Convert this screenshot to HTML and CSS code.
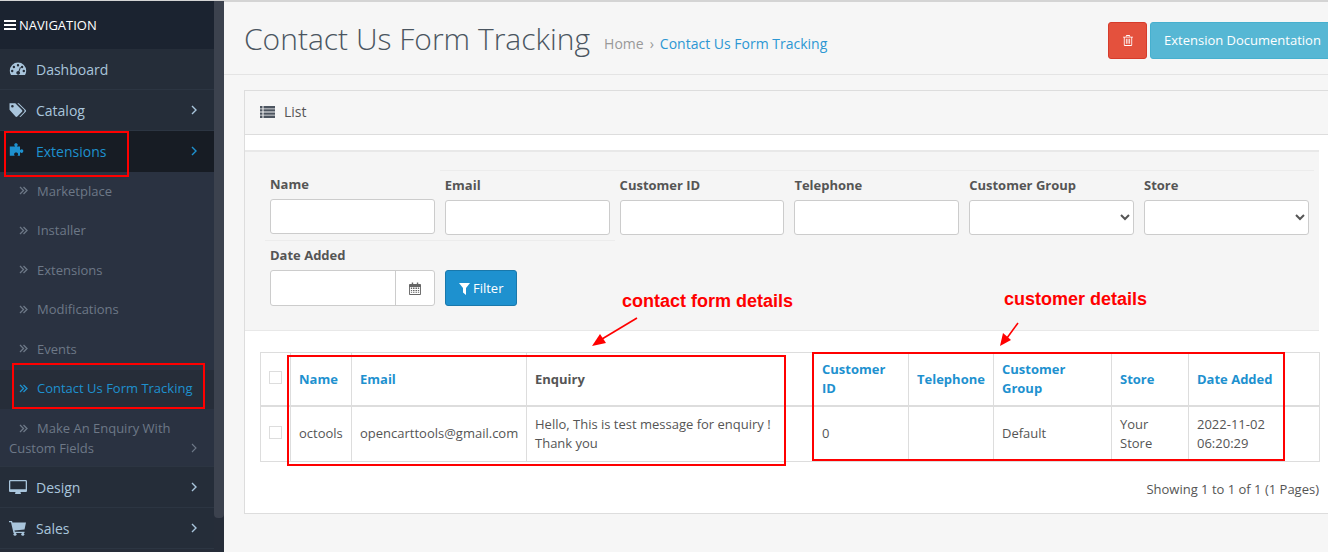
FILE: index.html
```html
<!DOCTYPE html>
<html>

<head>
    <meta charset="UTF-8">
    <title>Contact Us Form Tracking</title>
    <link rel="stylesheet" href="styles.css">
</head>

<body>
    <div class="page">
        <!-- sidebar -->
        <aside class="sidebar">
            <div class="side-inner">
                <div class="nav-title">
                    <svg class="bars" viewBox="0 0 12 10"><path d="M0 0h12v2H0zM0 4h12v2H0zM0 8h12v2H0z" /></svg>
                    <span>NAVIGATION</span>
                </div>
                <ul class="menu">
                    <li class="menu-item">
                        <svg class="ico" viewBox="0 0 18 16"><path fill-rule="evenodd" d="M9 1.5a8.2 8.2 0 0 0-8.2 8.3c0 1.600.4 3 1.200 4.200h14c.8-1.200 1.200-2.600 1.200-4.200A8.200 8.200 0 0 0 9 1.500zM9 3a1.200 1.200 0 1 1 0 2.400A1.200 1.200 0 0 1 9 3zM4.900 4.800a1.200 1.200 0 1 1 0 2.400 1.200 1.200 0 0 1 0-2.400zm8.200 0a1.200 1.200 0 1 1 0 2.400 1.200 1.200 0 0 1 0-2.400zM3.200 8.800a1.200 1.200 0 1 1 0 2.400 1.200 1.200 0 0 1 0-2.400zm11.600 0a1.200 1.200 0 1 1 0 2.400 1.200 1.200 0 0 1 0-2.400zM11 6l.9.4-1.500 4a1.900 1.900 0 1 1-.9-.4z" /></svg>
                        <span>Dashboard</span>
                    </li>
                    <li class="menu-item">
                        <svg class="ico" viewBox="0 0 18 16"><path fill-rule="evenodd" d="M.5 1.200h5.800L13 8a1.300 1.300 0 0 1 0 1.800l-4.700 4.700a1.300 1.300 0 0 1-1.800 0L.5 7.800zm2.900 1.800a1.300 1.300 0 1 0 0 2.600 1.300 1.300 0 0 0 0-2.600z" /><path d="M8.300 1.200h1.500L16.700 8a1.300 1.300 0 0 1 0 1.800l-4.700 4.700a1.300 1.300 0 0 1-1.500.2l4.600-4.700a1.600 1.600 0 0 0 0-2.200z" /></svg>
                        <span>Catalog</span>
                        <svg class="angle" viewBox="0 0 6 10"><path d="M1 1l4 4-4 4" /></svg>
                    </li>
                    <li class="menu-item is-open">
                        <svg class="ico" viewBox="0 0 18 16"><path d="M4 3.500h2.200C5.500 2.900 5.200 2.400 5.200 1.800 5.200.8 6 .2 7 .2s1.800.6 1.800 1.600c0 .6-.3 1.100-1 1.700H11v3.700c.6-.6 1.100-.9 1.700-.9 1 0 1.600.8 1.600 1.800s-.6 1.800-1.600 1.800c-.6 0-1.100-.3-1.700-.9v3.700H8.400c.5-.6.700-1 .7-1.500 0-1-.9-1.600-2-1.600s-2 .6-2 1.600c0 .5.200.9.700 1.500H.8V3.500z" /></svg>
                        <span>Extensions</span>
                        <svg class="angle" viewBox="0 0 6 10"><path d="M1 1l4 4-4 4" /></svg>
                    </li>
                    <li class="sub-item"><svg class="dbl" viewBox="0 0 9 9"><path d="M1 1l3.500 3.500L1 8M4.500 1L8 4.500 4.500 8" /></svg><span>Marketplace</span></li>
                    <li class="sub-item"><svg class="dbl" viewBox="0 0 9 9"><path d="M1 1l3.500 3.500L1 8M4.500 1L8 4.500 4.500 8" /></svg><span>Installer</span></li>
                    <li class="sub-item"><svg class="dbl" viewBox="0 0 9 9"><path d="M1 1l3.500 3.500L1 8M4.500 1L8 4.500 4.500 8" /></svg><span>Extensions</span></li>
                    <li class="sub-item"><svg class="dbl" viewBox="0 0 9 9"><path d="M1 1l3.500 3.500L1 8M4.500 1L8 4.500 4.500 8" /></svg><span>Modifications</span></li>
                    <li class="sub-item"><svg class="dbl" viewBox="0 0 9 9"><path d="M1 1l3.500 3.500L1 8M4.500 1L8 4.500 4.500 8" /></svg><span>Events</span></li>
                    <li class="sub-item is-active"><svg class="dbl" viewBox="0 0 9 9"><path d="M1 1l3.500 3.500L1 8M4.500 1L8 4.500 4.500 8" /></svg><span>Contact Us Form Tracking</span></li>
                    <li class="sub-item is-double">
                        <div class="sub-line"><svg class="dbl" viewBox="0 0 9 9"><path d="M1 1l3.500 3.500L1 8M4.500 1L8 4.500 4.500 8" /></svg><span>Make An Enquiry With</span></div>
                        <div class="sub-line-2"><span>Custom Fields</span><svg class="angle" viewBox="0 0 6 10"><path d="M1 1l4 4-4 4" /></svg></div>
                    </li>
                    <li class="menu-item">
                        <svg class="ico" viewBox="0 0 18 16"><path fill-rule="evenodd" d="M1.300 1h15.400c.7 0 1.300.6 1.300 1.300v9.400c0 .7-.6 1.300-1.300 1.300H11.500c0 .8.5 1.200.5 1.600 0 .2-.2.400-.4.400H6.400a.4.400 0 0 1-.4-.4c0-.4.500-.8.500-1.600H1.300C.6 13 0 12.400 0 11.700V2.300C0 1.600.6 1 1.300 1zM1.300 2.300v8h15.400v-8z" /></svg>
                        <span>Design</span>
                        <svg class="angle" viewBox="0 0 6 10"><path d="M1 1l4 4-4 4" /></svg>
                    </li>
                    <li class="menu-item">
                        <svg class="ico" viewBox="0 0 18 16"><path d="M0 1h3l.5 1.500H17l-1.500 7-10 1 .4 1.200h9.600v1.300H4.500L2 2.300H0z" /><circle cx="6" cy="14.300" r="1.500" /><circle cx="13.800" cy="14.300" r="1.500" /></svg>
                        <span>Sales</span>
                        <svg class="angle" viewBox="0 0 6 10"><path d="M1 1l4 4-4 4" /></svg>
                    </li>
                </ul>
            </div>
            <div class="side-scroll"></div>
        </aside>

        <!-- content -->
        <main class="content">
            <header class="page-head">
                <h1>Contact Us Form Tracking</h1>
                <div class="crumbs">
                    <span class="crumb-home">Home</span>
                    <span class="crumb-sep">›</span>
                    <span class="crumb-link">Contact Us Form Tracking</span>
                </div>
                <div class="head-btns">
                    <button class="btn-del">
                        <svg viewBox="0 0 12 13"><path fill-rule="evenodd" d="M4 0h4l.8 2H12v1h-1v9a1 1 0 0 1-1 1H2a1 1 0 0 1-1-1V3H0V2h3.200zM4.300 1l-.3 1h4l-.3-1zM2 3v9h8V3zM3.500 4.500h1v6h-1zM5.500 4.500h1v6h-1zM7.500 4.500h1v6h-1z" /></svg>
                    </button>
                    <button class="btn-doc">Extension Documentation</button>
                </div>
            </header>

            <section class="panel">
                <div class="panel-head">
                    <svg class="list-ico" viewBox="0 0 15 12"><path d="M0 0h2.500v2.400H0zM3.500 0H15v2.400H3.500zM0 3.200h2.500v2.400H0zM3.500 3.200H15v2.400H3.500zM0 6.400h2.500v2.400H0zM3.500 6.400H15v2.400H3.500zM0 9.600h2.500V12H0zM3.500 9.600H15V12H3.500z" /></svg>
                    <span>List</span>
                </div>
                <div class="panel-body">
                    <div class="filter-well">
                        <div class="filter-row">
                            <div class="field field-first"><label>Name</label><input type="text"></div>
                            <div class="field"><label>Email</label><input type="text"></div>
                            <div class="field"><label>Customer ID</label><input type="text"></div>
                            <div class="field"><label>Telephone</label><input type="text"></div>
                            <div class="field"><label>Customer Group</label><select></select></div>
                            <div class="field"><label>Store</label><select></select></div>
                        </div>
                        <div class="filter-row-2">
                            <div class="field-date">
                                <label>Date Added</label>
                                <div class="date-group">
                                    <input type="text">
                                    <span class="date-btn">
                                        <svg viewBox="0 0 13 14"><path fill-rule="evenodd" d="M1 2h2V.5h1.500V2h4V.5H10V2h2a1 1 0 0 1 1 1v10a1 1 0 0 1-1 1H1a1 1 0 0 1-1-1V3a1 1 0 0 1 1-1zM1 5.500V13h11V5.500zM3.400 6v1.500H2V6zM6 6v1.500H4.300V6zM8.700 6v1.500H7V6zM11 6v1.500H9.600V6zM3.400 8.500V10H2V8.500zM6 8.500V10H4.300V8.500zM8.700 8.500V10H7V8.500zM11 8.500V10H9.600V8.500zM3.400 11v1H2v-1zM6 11v1H4.300v-1zM8.700 11v1H7v-1zM11 11v1H9.600v-1z" /></svg>
                                    </span>
                                </div>
                            </div>
                            <button class="btn-filter">
                                <svg viewBox="0 0 11 12"><path d="M0 0h11L7 5v7L4 9.500V5z" /></svg>
                                Filter
                            </button>
                        </div>
                    </div>

                    <table class="list-table">
                        <colgroup>
                            <col class="c-check"><col class="c-name"><col class="c-email"><col class="c-enquiry">
                            <col class="c-id"><col class="c-tel"><col class="c-group"><col class="c-store"><col class="c-date">
                        </colgroup>
                        <thead>
                            <tr>
                                <th class="check-cell"><input type="checkbox"></th>
                                <th><a>Name</a></th>
                                <th><a>Email</a></th>
                                <th>Enquiry</th>
                                <th><a>Customer ID</a></th>
                                <th><a>Telephone</a></th>
                                <th><a>Customer Group</a></th>
                                <th><a>Store</a></th>
                                <th><a>Date Added</a></th>
                            </tr>
                        </thead>
                        <tbody>
                            <tr>
                                <td class="check-cell"><input type="checkbox"></td>
                                <td>octools</td>
                                <td>opencarttools@gmail.com</td>
                                <td>Hello, This is test message for enquiry ! Thank you</td>
                                <td>0</td>
                                <td></td>
                                <td>Default</td>
                                <td>Your Store</td>
                                <td>2022-11-02<br>06:20:29</td>
                            </tr>
                        </tbody>
                    </table>
                    <div class="result-count">Showing 1 to 1 of 1 (1 Pages)</div>
                </div>
            </section>
        </main>
    </div>

    <!-- red notes drawn on top of the screenshot -->
    <div class="mark mark-ext"></div>
    <div class="mark mark-contact"></div>
    <div class="mark mark-form"></div>
    <div class="mark mark-cust"></div>
    <div class="note note-form">contact form details</div>
    <div class="note note-cust">customer details</div>
    <svg class="arrows" viewBox="0 0 1328 552">
        <path class="arrow-line" d="M637 318L602 339" />
        <path class="arrow-head" d="M592 346L600 334 606 343z" />
        <path class="arrow-line" d="M1018 323L1007 338" />
        <path class="arrow-head" d="M1000 346L1003 333 1011 340z" />
    </svg>
</body>

</html>
```

FILE: styles.css
```css
* {
    box-sizing: border-box;
}

html,
body {
    margin: 0;
    height: 552px;
    overflow: hidden;
}

body {
    font-family: "Open Sans", sans-serif;
    font-size: 13px;
    color: #555;
    background: #f6f6f6;
}

.page {
    display: flex;
    height: 552px;
    border-top: 2px solid #d4d4d4;
}

/* sidebar */
.sidebar {
    width: 224px;
    flex: none;
    display: flex;
    background: #262d39;
    margin-top: -1px;
}

.side-inner {
    width: 214px;
    flex: none;
}

.side-scroll {
    width: 10px;
    height: 517px;
    background: #3c424e;
    border-radius: 0 0 4px 4px;
}

.nav-title {
    height: 48px;
    display: flex;
    align-items: center;
    gap: 3px;
    padding-left: 4px;
    background: #1b2330;
    color: #fff;
    font-size: 13px;
}

.bars {
    width: 12px;
    height: 10px;
    fill: #fff;
}

.menu {
    list-style-type: none;
    margin: 0;
    padding: 0;
}

.menu-item {
    height: 41px;
    display: flex;
    align-items: center;
    padding: 0 17px 0 9px;
    border-bottom: 1px solid #2c3542;
    background: #252d39;
    color: #a9c5dc;
    font-size: 14px;
}

.menu-item span {
    flex: 1;
    margin-left: 9px;
}

.ico {
    width: 18px;
    height: 16px;
    fill: #a9c5dc;
}

.angle {
    width: 6px;
    height: 10px;
    fill: none;
    stroke: #a9c5dc;
    stroke-width: 1.400;
}

.is-open {
    background: #171c24;
    color: #1e91cf;
    border-bottom: 0;
    padding-bottom: 1px;
}

.is-open .ico {
    fill: #1e91cf;
}

.is-open .angle {
    stroke: #1e91cf;
}

.sub-item {
    height: 39.500px;
    display: flex;
    align-items: center;
    padding-left: 19px;
    padding-bottom: 2px;
    background: #2a3241;
    color: #6d7887;
    font-size: 13px;
}

.dbl {
    width: 9px;
    height: 9px;
    margin-right: 9px;
    fill: none;
    stroke: #6d7887;
    stroke-width: 1.300;
}

.is-active {
    background: #262d39;
    color: #1e91cf;
}

.is-active .dbl {
    stroke: #1e91cf;
}

.is-double {
    display: block;
    height: 58px;
    padding: 9px 17px 0 9px;
    border-bottom: 1px solid #2c3542;
}

.sub-line {
    display: flex;
    align-items: center;
    padding-left: 10px;
    line-height: 20px;
}

.sub-line-2 {
    display: flex;
    align-items: center;
    justify-content: space-between;
    line-height: 20px;
}

.sub-line-2 .angle {
    stroke: #6d7887;
    stroke-width: 1.100;
}

/* content */
.content {
    flex: 1;
    min-width: 0;
}

.page-head {
    height: 73px;
    display: flex;
    align-items: center;
    padding: 0 0 0 20px;
    border-bottom: 1px solid #e4e4e4;
    white-space: nowrap;
}

.page-head h1 {
    margin: 0 14px 0 0;
    font-size: 30px;
    font-weight: 300;
    color: #4a5560;
}

.crumbs {
    display: flex;
    gap: 6px;
    padding-top: 10px;
    font-size: 14px;
}

.crumb-home,
.crumb-sep {
    color: #999;
}

.crumb-link {
    color: #2c97d3;
}

.head-btns {
    margin-left: auto;
    display: flex;
    gap: 3px;
    margin-right: -7px;
    margin-top: 4px;
}

.head-btns button {
    height: 37px;
    border-radius: 3px;
    color: #fff;
    font-family: inherit;
    font-size: 13px;
    padding: 0;
}

.btn-del {
    width: 39px;
    background: #e4513d;
    border: 1px solid #d63b2b;
}

.btn-del svg {
    width: 10px;
    height: 11px;
    fill: #fff;
    vertical-align: -1px;
}

.btn-doc {
    width: 185px;
    text-align: left;
    padding-left: 13px !important;
    background: #56b7d4;
    border: 1px solid #46b0cf;
}

.panel {
    width: 1091px;
    margin: 15px 0 0 20px;
    background: #fff;
    border: 1px solid #ddd;
    height: 424px;
}

.panel-head {
    height: 44px;
    display: flex;
    align-items: center;
    gap: 9px;
    padding-left: 15px;
    padding-bottom: 2px;
    background: #f6f6f6;
    border-bottom: 1px solid #ddd;
    font-size: 14px;
    color: #555;
}

.list-ico {
    width: 15px;
    height: 12px;
    fill: #4d5560;
}

.panel-body {
    padding: 15px 15px 0 0;
}

.filter-well {
    height: 181px;
    padding: 23px 0 0 25px;
    background: #f5f5f5;
    border-top: 2px solid #e8e8e8;
    border-bottom: 1px solid #e8e8e8;
}

.filter-row {
    display: flex;
    gap: 10px;
}

.field {
    width: 164.800px;
    position: relative;
}

.field::before {
    content: "";
    position: absolute;
    top: -5px;
    left: -5px;
    right: -5px;
    height: 1px;
    background: #ececec;
}

.field-first::before {
    display: none;
}

.field-first {
    margin-top: -1px;
}

.field label,
.field-date label {
    display: block;
    height: 21px;
    margin-bottom: 4px;
    font-size: 13px;
    font-weight: 700;
    line-height: 21px;
    color: #555;
}

.field input,
.field select,
.date-group {
    display: block;
    width: 100%;
    height: 35px;
    background: #fff;
    border: 1px solid #ccc;
    border-radius: 3px;
}

.field select {
    color: #555;
}

.filter-row-2 {
    display: flex;
    align-items: flex-end;
    gap: 10px;
    margin-top: 5px;
    width: 350px;
    margin-left: -5px;
    padding: 4px 0 0 5px;
    border-top: 1px solid #ececec;
}

.field-date {
    width: 165px;
}

.date-group {
    display: flex;
    height: 36px;
}

.date-group input {
    flex: 1;
    min-width: 0;
    border: 0;
    background: none;
}

.date-btn {
    width: 39px;
    display: flex;
    align-items: center;
    justify-content: center;
    border-left: 1px solid #ccc;
}

.date-btn svg {
    width: 12px;
    height: 13px;
    fill: #666;
}

.btn-filter {
    width: 72px;
    height: 36px;
    background: #1e91cf;
    border: 1px solid #1978ab;
    border-radius: 3px;
    color: #fff;
    font-family: inherit;
    font-size: 13px;
    padding: 0;
}

.btn-filter svg {
    width: 11px;
    height: 12px;
    fill: #fff;
    vertical-align: -2px;
}

.list-table {
    width: 1059px;
    margin: 21px 0 0 15px;
    table-layout: fixed;
    border-collapse: collapse;
    font-size: 13px;
    line-height: 19px;
}

.c-check { width: 30px; }
.c-name { width: 61px; }
.c-email { width: 175px; }
.c-enquiry { width: 287px; }
.c-id { width: 95px; }
.c-tel { width: 85px; }
.c-group { width: 118px; }
.c-store { width: 77px; }
.c-date { width: 131px; }

.list-table th,
.list-table td {
    padding: 7px 8px;
    border: 1px solid #ddd;
    text-align: left;
}

.list-table th {
    height: 53px;
    border-bottom-width: 2px;
    font-weight: 700;
    color: #555;
}

.list-table td {
    height: 55px;
}

.list-table a {
    color: #1e91cf;
}

.list-table input {
    appearance: none;
    display: block;
    width: 13px;
    height: 13px;
    margin: 0;
    background: #fff;
    border: 1px solid #ddd;
}

.list-table th.check-cell {
    vertical-align: top;
    padding-top: 18px;
}

.list-table td.check-cell {
    vertical-align: top;
    padding-top: 19px;
}

.result-count {
    margin-top: 17px;
    padding-right: 0;
    text-align: right;
    font-size: 13px;
    line-height: 20px;
}

/* annotations */
.mark {
    position: absolute;
    border: 2px solid #f00;
}

.mark-ext {
    left: 4px;
    top: 131px;
    width: 125px;
    height: 46px;
}

.mark-contact {
    left: 12px;
    top: 363px;
    width: 193px;
    height: 46px;
}

.mark-form {
    left: 287px;
    top: 355px;
    width: 499px;
    height: 111px;
}

.mark-cust {
    left: 812px;
    top: 352px;
    width: 473px;
    height: 109px;
}

.note {
    position: absolute;
    font-family: "Liberation Sans", Arial, sans-serif;
    font-size: 18px;
    font-weight: 700;
    line-height: 20px;
    color: #f00;
    white-space: nowrap;
}

.note-form {
    left: 622px;
    top: 291px;
}

.note-cust {
    left: 1004px;
    top: 289px;
}

.arrows {
    position: absolute;
    left: 0;
    top: 0;
    width: 1328px;
    height: 552px;
    pointer-events: none;
}

.arrow-line {
    stroke: #f00;
    stroke-width: 1.600;
    fill: none;
}

.arrow-head {
    fill: #f00;
}
```
